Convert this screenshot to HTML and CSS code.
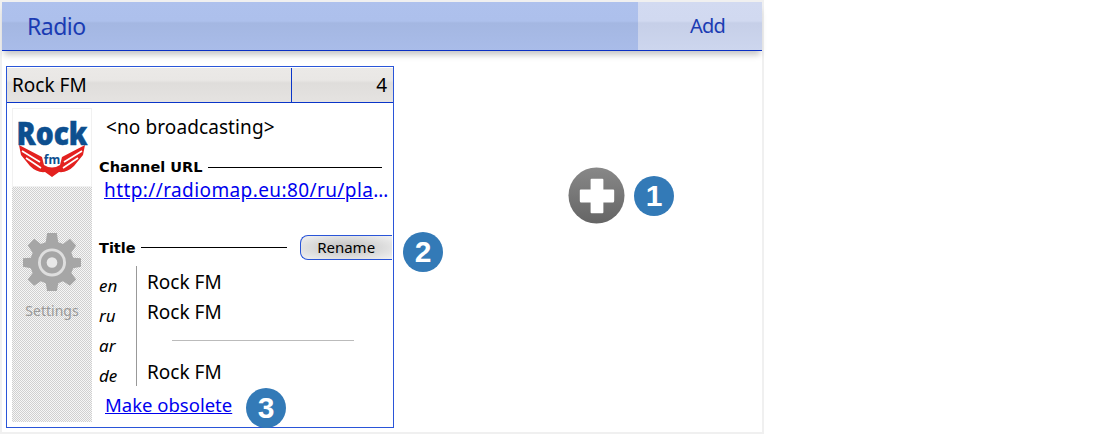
FILE: index.html
```html
<!DOCTYPE html>
<html lang="en">
<head>
<meta charset="utf-8">
<title>Radio</title>
<link rel="stylesheet" href="styles.css">
</head>
<body>
<div class="panel">
  <header class="topbar">
    <div class="topbar-title">Radio</div>
    <div class="topbar-add">Add</div>
  </header>
  <main class="content">
    <section class="card">
      <div class="card-head">
        <div class="card-name">Rock FM</div>
        <div class="card-count">4</div>
      </div>
      <div class="card-body">
        <aside class="side">
          <div class="logo">
            <svg width="78" height="78" viewBox="0 0 78 78">
              <path class="logo-red" d="M6 36 L29 48 L31 56 Q39 61 47 56 L49 48 L72 36 L70 46 L61 57 Q54 64 46 63 L39 68 L32 63 Q24 64 17 57 L8 46 Z"/>
              <path class="logo-white" d="M9 42 L27 53 M13 49 L28 59 M69 42 L51 53 M65 49 L50 59"/>
              <text class="logo-word" x="39" y="36" text-anchor="middle" textLength="71" lengthAdjust="spacingAndGlyphs">Rock</text>
              <text class="logo-fm" x="39" y="55" text-anchor="middle">fm</text>
            </svg>
          </div>
          <div class="settings">
            <svg class="gear" width="58" height="58" viewBox="0 0 60 60">
              <path class="gear-body" d="M25 0 L35 0 L36.500 9.500 L41.500 11.500 L48.500 6 L55 13 L50 20.500 L52 25.500 L60 26 L60 35 L52 36.500 L50 41.500 L55 48 L48.500 54.500 L41.500 50 L36.500 52 L35 60 L25 60 L23.500 52 L18.500 50 L11.500 54.500 L5 48 L10 41.500 L8 36.500 L0 35 L0 26 L8 25.500 L10 20.500 L5 13 L11.500 6 L18.500 11.500 L23.500 9.500 Z"/>
              <circle class="gear-ring" cx="30" cy="30.500" r="13"/>
              <circle class="gear-hole" cx="30" cy="30.500" r="5.500"/>
            </svg>
            <div class="settings-label">Settings</div>
          </div>
        </aside>
        <div class="info">
          <div class="broadcast">&lt;no broadcasting&gt;</div>
          <div class="section-row url-head">
            <span class="section-label">Channel URL</span>
            <span class="section-rule"></span>
          </div>
          <a class="url" href="#">http://radiomap.eu:80/ru/play/rock-fm</a>
          <div class="section-row title-head">
            <span class="section-label">Title</span>
            <span class="section-rule"></span>
            <button class="rename" type="button">Rename</button>
          </div>
          <div class="titles">
            <div class="langs">
              <div>en</div><div>ru</div><div>ar</div><div>de</div>
            </div>
            <div class="values">
              <div class="value">Rock FM</div>
              <div class="value">Rock FM</div>
              <div class="value value-empty"><span class="empty-rule"></span></div>
              <div class="value">Rock FM</div>
            </div>
          </div>
          <a class="obsolete" href="#">Make obsolete</a>
        </div>
      </div>
    </section>
  </main>
</div>
<svg class="plus" width="57" height="57" viewBox="0 0 58 58">
  <defs>
    <linearGradient id="plusfill" x1="0" y1="0" x2="0" y2="1">
      <stop offset="0" stop-color="#888"/>
      <stop offset="1" stop-color="#656565"/>
    </linearGradient>
  </defs>
  <circle cx="29" cy="29" r="28.500" fill="url(#plusfill)"/>
  <path d="M23 13 Q23 12 24 12 L35 12 Q36 12 36 13 L36 23 L46 23 Q47 23 47 24 L47 34 Q47 36 46 36 L36 36 L36 46 Q36 47 35 47 L24 47 Q23 47 23 46 L23 36 L13 36 Q12 36 12 34 L12 24 Q12 23 13 23 L23 23 Z" fill="#fff"/>
</svg>
<div class="badge badge-1">1</div>
<div class="badge badge-2">2</div>
<div class="badge badge-3">3</div>
</body>
</html>
```
FILE: styles.css
```css
* { box-sizing: border-box; }
html, body { margin: 0; padding: 0; }
body {
  position: relative;
  width: 1100px;
  height: 434px;
  overflow: hidden;
  background: #fff;
  font-family: "Noto Sans", "Open Sans", sans-serif;
  color: #000;
}
.panel {
  width: 764px;
  height: 434px;
  padding: 2px;
  background: #f0f0f0;
  display: flex;
  flex-direction: column;
}
.topbar {
  display: flex;
  height: 49px;
  flex: none;
  border-bottom: 1px solid #0a2fc4;
  background: linear-gradient(#aec1ed 0, #adc0ec 19px, #a4b7e2 21px, #a9bce9 100%);
  box-shadow: 0 6px 6px -2px rgba(0,0,0,.22);
  position: relative;
}
.topbar-title {
  flex: 1;
  padding-left: 25px;
  font-size: 23px;
  letter-spacing: -.5px;
  line-height: 48px;
  color: #1a3bb3;
}
.topbar-add {
  width: 124px;
  text-align: center;
  padding-left: 15px;
  font-size: 20px;
  letter-spacing: -.8px;
  line-height: 48px;
  color: #1a3bb3;
  background: linear-gradient(#d2daf1 0, #d1d9f0 19px, #c6cfe8 21px, #cdd6ee 100%);
}
.content {
  flex: 1;
  background: #fff;
  padding: 15px 0 0 4px;
}
.card {
  width: 388px;
  height: 362px;
  border: 1px solid #2a55d8;
  background: #fff;
  display: flex;
  flex-direction: column;
}
.card-head {
  display: flex;
  height: 35px;
  margin-top: 1px;
  border-bottom: 1px solid #0a35c8;
  background: linear-gradient(#ebe9e7 0, #e9e7e5 12px, #dfdddb 15px, #e5e3e1 100%);
  font-size: 19px;
  line-height: 34px;
}
.card-name { flex: 1; padding-left: 5px; }
.card-count {
  width: 102px;
  border-left: 1px solid #0a35c8;
  text-align: right;
  padding-right: 6px;
}
.card-body { flex: 1; display: flex; padding: 5px 0 5px 5px; min-height: 0; }
.side { width: 80px; flex: none; display: flex; flex-direction: column; }
.logo {
  height: 79px;
  border: 1px solid #f1f1f1;
  display: flex;
  align-items: center;
  justify-content: center;
}
.logo-word { font: 800 32px "Open Sans", "Noto Sans", sans-serif; fill: #0d4f8f; stroke: #0d4f8f; stroke-width: .5px; }
.logo-red { fill: #e3211f; }
.logo-white { stroke: #fff; stroke-width: 1.6; fill: none; }
.logo-fm { font: 700 12px "Noto Sans", sans-serif; fill: #0d4f8f; }
.settings {
  flex: 1;
  display: flex;
  flex-direction: column;
  align-items: center;
  padding-top: 46px;
  background-color: #fff;
  background-image: conic-gradient(#d0d0d0 25%, #f6f6f6 0 50%, #d0d0d0 0 75%, #f6f6f6 0);
  background-size: 2px 2px;
}
.gear-body { fill: #a6a6a6; }
.gear-ring { fill: none; stroke: #dedede; stroke-width: 3; }
.gear-hole { fill: #e8e8e8; }
.settings-label { margin-top: 10px; font-size: 14px; line-height: 20px; color: #999; }
.info { flex: 1; min-width: 0; padding-left: 7px; display: flex; flex-direction: column; }
.broadcast { font-size: 19px; letter-spacing: .1px; line-height: 26px; padding: 6px 0 0 7px; }
.section-row { display: flex; align-items: center; }
.section-label { font-family: "DejaVu Sans", sans-serif; font-size: 14.5px; font-weight: 700; line-height: 20px; }
.section-rule { height: 1px; background: #000; margin-left: 6px; }
.url-head { margin-top: 17px; padding-right: 11px; }
.url-head .section-rule { flex: 1; }
.url {
  display: block;
  font-size: 19px;
  letter-spacing: .4px;
  line-height: 26px;
  padding-left: 5px;
  width: 290px;
  color: #0000ee;
  white-space: nowrap;
  overflow: hidden;
  text-overflow: ellipsis;
}
.title-head { margin-top: 32px; height: 25px; }
.title-head .section-rule { width: 146px; margin-left: 5px; }
.rename {
  margin-left: 13px;
  width: 92px;
  height: 25px;
  padding: 0;
  border: 1px solid #2a55d8;
  border-right: 0;
  border-radius: 8px 0 0 8px;
  background: radial-gradient(ellipse at center, #c9c9c9 20%, #f2f2f2 100%);
  font: 15px/23px "Noto Sans", sans-serif;
  color: #000;
}
.titles { display: flex; margin-top: 6px; height: 120px; }
.langs {
  width: 38px;
  border-right: 1px solid #999;
  font-size: 17px;
  font-style: italic;
  padding-top: 5px;
}
.langs div { height: 30px; line-height: 30px; }
.values { flex: 1; padding-left: 10px; padding-top: 1px; }
.value { height: 30px; font-size: 19px; line-height: 30px; }
.value-empty { padding-top: 13px; }
.empty-rule { display: block; width: 182px; height: 1px; background: #bbb; margin-left: 25px; }
.obsolete { font-size: 18.5px; line-height: 26px; padding-left: 6px; margin-top: 6px; color: #0000ee; }
.plus { position: absolute; left: 568px; top: 167px; }
.badge {
  position: absolute;
  width: 40px;
  height: 40px;
  border-radius: 50%;
  background: #337ab7;
  color: #fff;
  font: 700 30px/40px "Liberation Sans", sans-serif;
  text-align: center;
}
.badge-1 { left: 634px; top: 176px; }
.badge-2 { left: 403px; top: 232px; }
.badge-3 { left: 246px; top: 388px; }
```
